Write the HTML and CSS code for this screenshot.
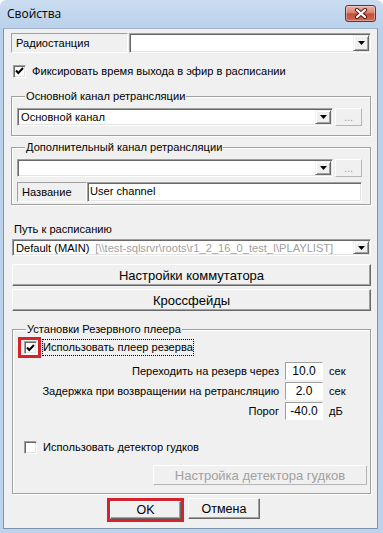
FILE: index.html
```html
<!DOCTYPE html>
<html lang="ru">
<head>
    <meta charset="UTF-8">
    <meta name="viewport" content="width=device-width, initial-scale=1.0">
    <title>Свойства</title>
    <link rel="stylesheet" href="styles.css">
</head>
<body>
<div class="window">
    <div class="titlebar">
        <span class="title">Свойства</span>
        <div class="close-btn">
            <svg width="14" height="11" viewBox="0 0 14 11">
                <path d="M3 2 L11 9 M11 2 L3 9" stroke="#5e1f18" stroke-width="4.2" stroke-linecap="round"/>
                <path d="M3 2 L11 9 M11 2 L3 9" stroke="#fff" stroke-width="2.2" stroke-linecap="round"/>
            </svg>
        </div>
    </div>

    <div class="client">
        <!-- Radio station -->
        <div class="row station-row">
            <div class="static-label station-label">Радиостанция</div>
            <div class="combo grow">
                <span class="combo-text"></span>
                <span class="drop-btn"><svg width="7" height="4" viewBox="0 0 7 4"><polygon points="0,0 7,0 3.5,4" fill="#000"/></svg></span>
            </div>
        </div>

        <div class="check-row fix-row">
            <span class="checkbox"><svg width="9" height="8" viewBox="0 0 9 8"><polyline points="1,3.5 3.3,6 8,1" fill="none" stroke="#000" stroke-width="2"/></svg></span>
            <span>Фиксировать время выхода в эфир в расписании</span>
        </div>

        <!-- Main channel -->
        <div class="group group-main">
            <div class="group-title">Основной канал ретрансляции</div>
            <div class="row">
                <div class="combo grow">
                    <span class="combo-text">Основной канал</span>
                    <span class="drop-btn"><svg width="7" height="4" viewBox="0 0 7 4"><polygon points="0,0 7,0 3.5,4" fill="#000"/></svg></span>
                </div>
                <div class="dots-btn">...</div>
            </div>
        </div>

        <!-- Extra channel -->
        <div class="group group-extra">
            <div class="group-title">Дополнительный канал ретрансляции</div>
            <div class="row">
                <div class="combo grow">
                    <span class="combo-text"></span>
                    <span class="drop-btn"><svg width="7" height="4" viewBox="0 0 7 4"><polygon points="0,0 7,0 3.5,4" fill="#000"/></svg></span>
                </div>
                <div class="dots-btn">...</div>
            </div>
            <div class="row name-row">
                <div class="static-label name-label">Название</div>
                <div class="edit grow">User channel</div>
            </div>
        </div>

        <div class="path-label">Путь к расписанию</div>
        <div class="combo path-combo">
            <span class="combo-text">Default (MAIN)<span class="path-dim">[\\test-sqlsrvr\roots\r1_2_16_0_test_I\PLAYLIST]</span></span>
            <span class="drop-btn"><svg width="7" height="4" viewBox="0 0 7 4"><polygon points="0,0 7,0 3.5,4" fill="#000"/></svg></span>
        </div>

        <div class="btn wide-btn switch-btn">Настройки коммутатора</div>
        <div class="btn wide-btn">Кроссфейды</div>

        <!-- Backup player -->
        <div class="group group-backup">
            <div class="group-title">Установки Резервного плеера</div>
            <div class="check-row backup-row">
                <span class="red-frame">
                    <span class="checkbox"><svg width="9" height="8" viewBox="0 0 9 8"><polyline points="1,3.5 3.3,6 8,1" fill="none" stroke="#000" stroke-width="2"/></svg></span>
                </span>
                <span class="focus-label">Использовать плеер резерва</span>
            </div>

            <div class="params">
                <span class="param-name">Переходить на резерв через</span>
                <span class="num">10.0</span>
                <span class="unit">сек</span>

                <span class="param-name">Задержка при возвращении на ретрансляцию</span>
                <span class="num">2.0</span>
                <span class="unit">сек</span>

                <span class="param-name">Порог</span>
                <span class="num">-40.0</span>
                <span class="unit">дБ</span>
            </div>

            <div class="check-row detector-row">
                <span class="checkbox"></span>
                <span>Использовать детектор гудков</span>
            </div>

            <div class="btn detector-btn">Настройка детектора гудков</div>
        </div>

        <div class="dialog-buttons">
            <span class="red-frame ok-frame"><span class="btn ok-btn">OK</span></span>
            <span class="btn cancel-btn">Отмена</span>
        </div>
    </div>
</div>
</body>
</html>
```

FILE: styles.css
```css
* {
    box-sizing: border-box;
}
body {
    margin: 0;
    font-family: "Liberation Sans", Arial, sans-serif;
    font-size: 11.1px;
    color: #000;
    background: #fff;
}
.window {
    width: 383px;
    height: 533px;
    display: flex;
    flex-direction: column;
    padding: 0 5px 4px 3px;
    background: linear-gradient(#cadcf0, #b9d1ea 30px, #bcd3eb);
    border-radius: 6px 6px 0 0;
    overflow: hidden;
}
.titlebar {
    height: 28px;
    margin: 0 -5px 0 -3px;
    padding: 0 7px 2px 7px;
    display: flex;
    align-items: center;
    justify-content: space-between;
}
.title {
    font-family: "Open Sans", "Noto Sans", sans-serif;
    font-size: 12px;
    color: #000;
}
.close-btn {
    width: 31px;
    height: 17px;
    margin-top: 1px;
    border: 1px solid #7a2a22;
    border-radius: 3px;
    background: linear-gradient(#eab0a3, #d88473 45%, #c44d3c 52%, #d06a55);
    box-shadow: inset 0 0 0 1px rgba(255, 255, 255, 0.35);
    display: flex;
    align-items: center;
    justify-content: center;
}
.client {
    flex: 1;
    background: #f0f0f0;
    border: 1px solid #7f93aa;
    border-top-color: #9db4cc;
    padding: 0 6px 0 7px;
    display: flex;
    flex-direction: column;
}

/* common controls */
.row {
    display: flex;
}
.grow {
    flex: 1;
}
.static-label {
    border: 1px solid;
    border-color: #a0a0a0 #fff #fff #a0a0a0;
    padding-left: 4px;
    display: flex;
    align-items: center;
}
.combo {
    height: 18px;
    background: #fff;
    border: 1px solid;
    border-color: #a0a0a0 #fff #fff #a0a0a0;
    box-shadow: inset 1px 1px #696969, inset -1px -1px #e3e3e3;
    padding: 1px;
    display: flex;
}
.combo-text {
    flex: 1;
    padding-left: 2px;
    display: flex;
    align-items: center;
    white-space: nowrap;
}
.drop-btn {
    width: 16px;
    background: #f0f0f0;
    border: 1px solid;
    border-color: #f0f0f0 #696969 #696969 #f0f0f0;
    box-shadow: inset 1px 1px #fff, inset -1px -1px #a0a0a0;
    display: flex;
    align-items: center;
    justify-content: center;
}
.dots-btn {
    width: 27px;
    height: 18px;
    margin-left: 2px;
    border: 1px solid;
    border-color: #fff #b5b5b5 #b5b5b5 #fff;
    color: #a0a0a0;
    font-size: 11px;
    text-align: center;
    line-height: 17px;
}
.edit {
    background: #fff;
    border: 1px solid;
    border-color: #a0a0a0 #fff #fff #a0a0a0;
    box-shadow: inset 1px 1px #696969, inset -1px -1px #e3e3e3;
    padding: 2px 0 0 2px;
}
.btn {
    background: #f0f0f0;
    border: 1px solid;
    border-color: #fff #696969 #696969 #fff;
    box-shadow: inset -1px -1px #a0a0a0;
    display: flex;
    align-items: center;
    justify-content: center;
}
.checkbox {
    width: 13px;
    height: 13px;
    background: #fff;
    border: 1px solid;
    border-color: #a0a0a0 #fff #fff #a0a0a0;
    box-shadow: inset 1px 1px #696969, inset -1px -1px #e3e3e3;
    display: flex;
    align-items: center;
    justify-content: center;
    flex-shrink: 0;
}
.check-row {
    display: flex;
    align-items: center;
}
.red-frame {
    border: 3px solid #d6232b;
    display: flex;
    align-items: center;
}

/* groups */
.group {
    border: 1px solid #a0a0a0;
    box-shadow: inset 1px 1px #fff, 1px 1px #fff;
    display: flex;
    flex-direction: column;
}
.group-title {
    width: fit-content;
    margin: -8px 0 0 8px;
    padding: 0 1px;
    line-height: 14px;
    background: #f0f0f0;
}

/* layout */
.station-row {
    margin-top: 4px;
    height: 20px;
}
.station-label {
    width: 117px;
    margin-right: 1px;
}
.station-row .combo {
    height: 20px;
}
.fix-row {
    margin-top: 10px;
    height: 16px;
    padding-left: 2px;
    gap: 6px;
}
.group-main {
    margin-top: 17px;
    padding: 0 8px 9px 5px;
}
.group-main .row,
.group-extra .row {
    margin-top: 5px;
}
.group-extra {
    margin-top: 11px;
    padding: 0 8px 2px 5px;
}
.name-row {
    height: 20px;
}
.name-label {
    width: 70px;
}
.path-label {
    margin-top: 17px;
    padding-left: 3px;
    line-height: 14px;
}
.path-combo {
    margin-top: 3px;
    height: 17px;
    margin-left: 1px;
}
.path-dim {
    color: #a0a0a0;
    margin-left: 6px;
}
.wide-btn {
    height: 22px;
    margin: 3px 0 0 1px;
    font-size: 13px;
}
.switch-btn {
    margin-top: 8px;
}
.group-backup {
    margin: 18px 0 0 1px;
    padding: 0 3px 8px 5px;
}
.backup-row {
    margin-top: 1px;
    height: 21px;
}
.backup-row .red-frame {
    width: 23px;
    height: 21px;
    padding-left: 3px;
}
.focus-label {
    margin-left: 2px;
    padding: 1px 0 2px 0;
    outline: 1px dotted #000;
}
.params {
    margin-top: 4px;
    display: grid;
    grid-template-columns: 261px 38px auto;
    column-gap: 6px;
    row-gap: 2px;
    align-items: center;
}
.param-name {
    text-align: right;
}
.num {
    height: 18px;
    background: #fff;
    border: 1px solid;
    border-color: #a0a0a0 #fff #fff #a0a0a0;
    text-align: center;
    line-height: 16px;
    font-size: 12px;
}
.detector-row {
    margin-top: 19px;
    height: 16px;
    padding-left: 6px;
    gap: 6px;
}
.detector-btn {
    width: 214px;
    height: 20px;
    margin: 10px 0 0 auto;
    color: #a0a0a0;
    font-size: 13px;
    border-color: #fff #b5b5b5 #b5b5b5 #fff;
    box-shadow: none;
}
.dialog-buttons {
    margin: 4px 0 0 96px;
    display: flex;
    align-items: flex-start;
    gap: 4px;
    font-size: 12.5px;
}
.ok-frame {
    width: 77px;
    height: 24px;
}
.ok-btn {
    width: 71px;
    height: 18px;
}
.cancel-btn {
    width: 72px;
    height: 21px;
}
```
